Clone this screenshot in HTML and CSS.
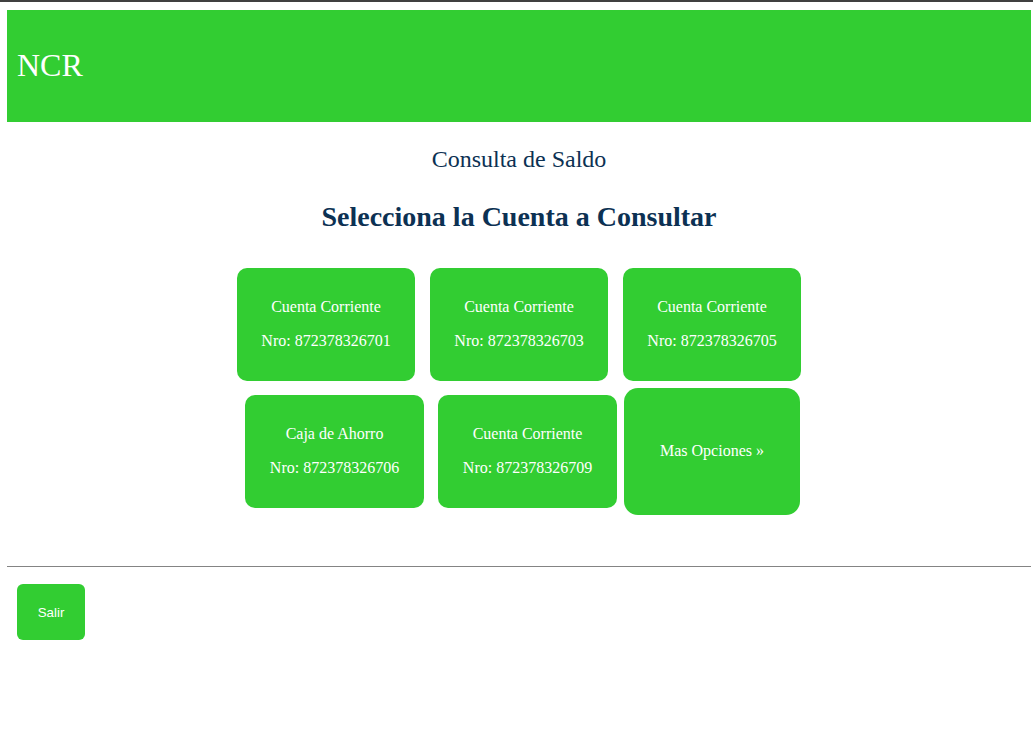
FILE: index.html
```html
<!DOCTYPE html>
<html lang="es">
<head>
<meta charset="utf-8">
<title>NCR - Consulta de Saldo</title>
<link rel="stylesheet" href="styles.css">
</head>
<body>
  <header class="topbar">
    <h1 class="brand">NCR</h1>
  </header>
  <main class="content">
    <h2 class="subtitle">Consulta de Saldo</h2>
    <h3 class="heading">Selecciona la Cuenta a Consultar</h3>
    <div class="accounts">
      <div class="row row-one">
        <a class="card" href="#"><p>Cuenta Corriente</p><p>Nro: 872378326701</p></a>
        <a class="card" href="#"><p>Cuenta Corriente</p><p>Nro: 872378326703</p></a>
        <a class="card" href="#"><p>Cuenta Corriente</p><p>Nro: 872378326705</p></a>
      </div>
      <div class="row row-two">
        <a class="card card-wide" href="#"><p>Caja de Ahorro</p><p>Nro: 872378326706</p></a>
        <a class="card card-wide card-tight" href="#"><p>Cuenta Corriente</p><p>Nro: 872378326709</p></a>
        <a class="card card-more" href="#"><p>Mas Opciones &raquo;</p></a>
      </div>
    </div>
  </main>
  <hr class="divider">
  <footer class="actions">
    <button class="btn-exit" type="button">Salir</button>
  </footer>
</body>
</html>
```
FILE: styles.css
```css
html {
  border-top: 2px solid #404040;
  background: #ffffff;
}
body {
  margin: 0;
  padding: 8px 2px 0 7px;
  font-family: "Liberation Serif", "Times New Roman", serif;
  color: #0c3153;
}
.topbar {
  box-sizing: border-box;
  height: 112px;
  background: #32cd32;
  display: flex;
  align-items: center;
  padding: 0 0 2px 10px;
}
.brand {
  margin: 0;
  font-size: 32px;
  font-weight: normal;
  color: #ffffff;
  line-height: 35px;
}
.content {
  text-align: center;
}
.subtitle {
  margin: 24px 0 0;
  font-size: 24px;
  font-weight: normal;
  line-height: 27px;
}
.heading {
  margin: 28px 0 0;
  font-size: 28px;
  font-weight: bold;
  line-height: 31px;
}
.accounts {
  margin-top: 36px;
}
.row {
  display: flex;
  justify-content: center;
  align-items: center;
}
.row-one {
  gap: 15px;
}
.row-two {
  margin-top: 7px;
  padding-left: 7px;
}
.card {
  box-sizing: border-box;
  width: 178px;
  height: 113px;
  padding-bottom: 2px;
  background: #32cd32;
  border-radius: 10px;
  color: #ffffff;
  text-decoration: none;
  display: flex;
  flex-direction: column;
  justify-content: center;
  align-items: center;
  font-size: 16px;
}
.card p {
  margin: 0;
  line-height: 18px;
}
.card p + p {
  margin-top: 16px;
}
.card-wide {
  width: 179px;
}
.card-tight {
  margin-left: 14px;
  margin-right: 7px;
}
.card-more {
  width: 176px;
  height: 127px;
  border-radius: 14px;
}
.divider {
  margin: 51px 0 0;
  height: 0;
  border: 0;
  border-top: 1px solid #848484;
}
.actions {
  padding: 17px 0 0 10px;
}
.btn-exit {
  width: 68px;
  height: 56px;
  border: 0;
  border-radius: 6px;
  background: #32cd32;
  color: #ffffff;
  font-family: "Liberation Sans", Arial, sans-serif;
  font-size: 13.33px;
  padding: 0;
  cursor: pointer;
}
```
